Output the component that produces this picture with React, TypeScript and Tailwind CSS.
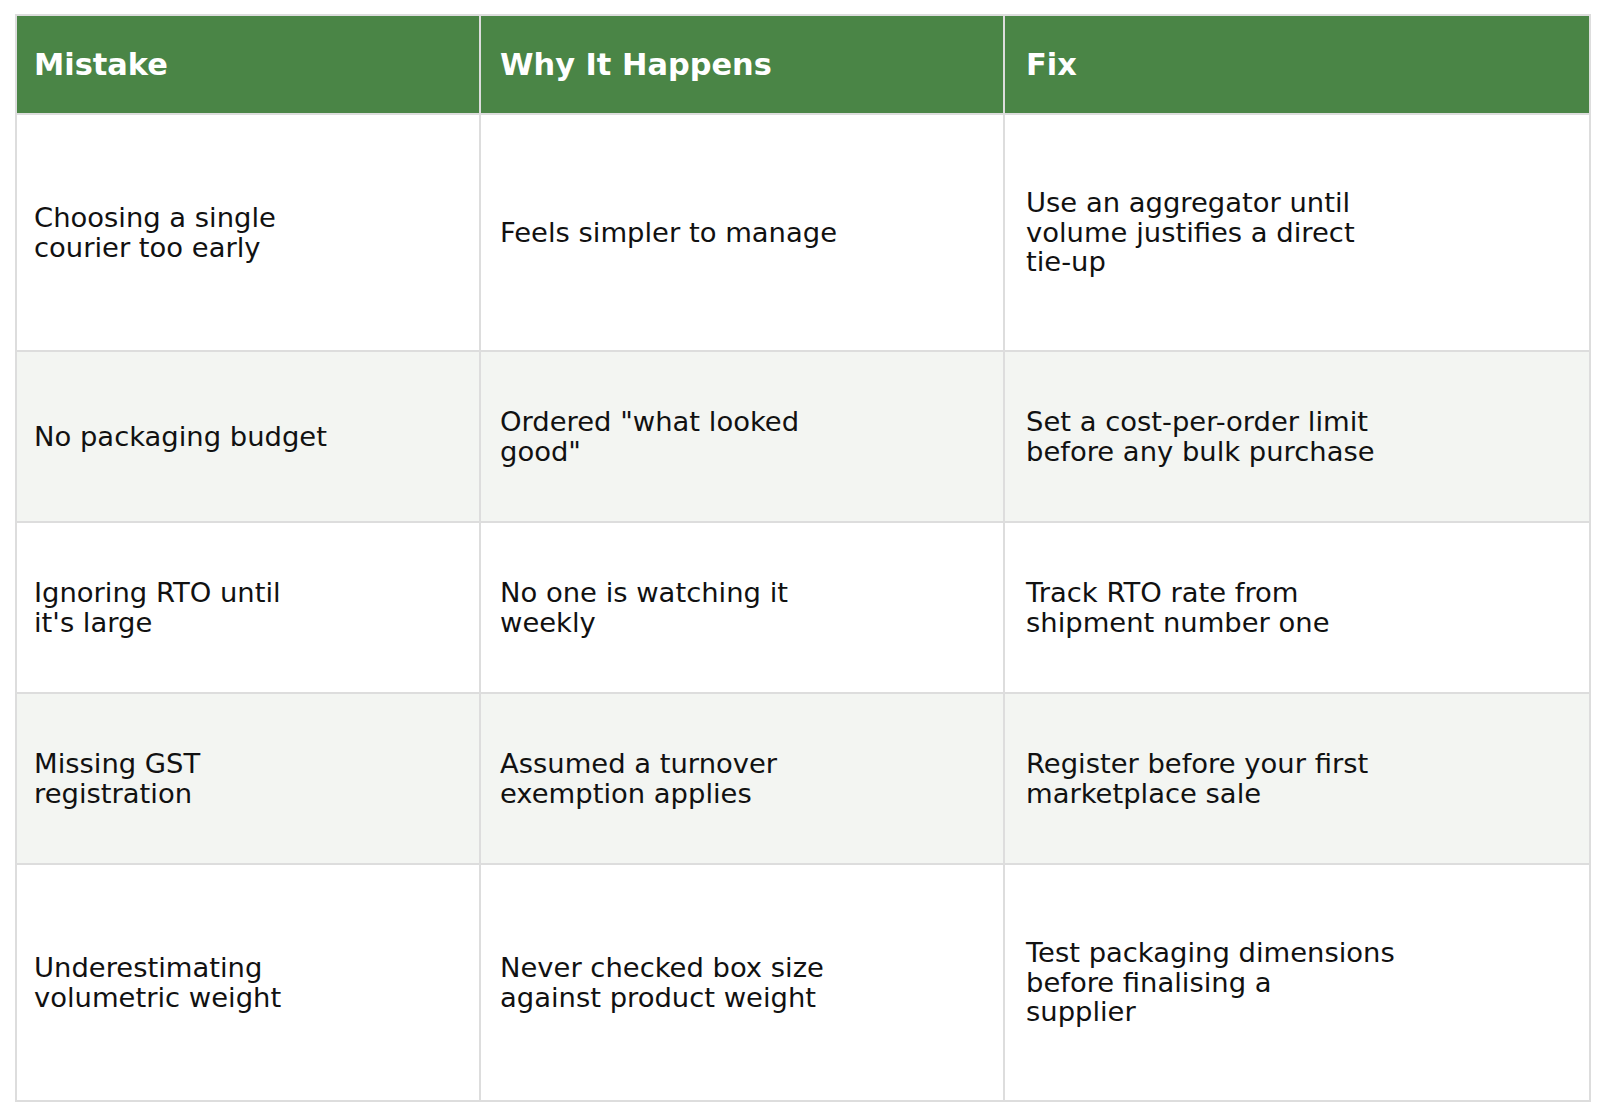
const headers = ["Mistake", "Why It Happens", "Fix"]
const pads = ["pl-[17px] pr-[17px]", "pl-[19px] pr-[17px]", "pl-[21px] pr-[17px]"]

const rows: { h: string; cells: string[][] }[] = [
  {
    h: "h-[237px]",
    cells: [
      ["Choosing a single", "courier too early"],
      ["Feels simpler to manage"],
      ["Use an aggregator until", "volume justifies a direct", "tie-up"],
    ],
  },
  {
    h: "h-[171px]",
    cells: [
      ["No packaging budget"],
      ['Ordered "what looked', 'good"'],
      ["Set a cost-per-order limit", "before any bulk purchase"],
    ],
  },
  {
    h: "h-[171px]",
    cells: [
      ["Ignoring RTO until", "it's large"],
      ["No one is watching it", "weekly"],
      ["Track RTO rate from", "shipment number one"],
    ],
  },
  {
    h: "h-[171px]",
    cells: [
      ["Missing GST", "registration"],
      ["Assumed a turnover", "exemption applies"],
      ["Register before your first", "marketplace sale"],
    ],
  },
  {
    h: "h-[237px]",
    cells: [
      ["Underestimating", "volumetric weight"],
      ["Never checked box size", "against product weight"],
      ["Test packaging dimensions", "before finalising a", "supplier"],
    ],
  },
]

export default function App() {
  return (
    <div className="w-[1604px] h-[1112px] bg-white pt-[14px] pl-[15px] font-['DejaVu_Sans',sans-serif]">
      <table className="table-fixed border-collapse w-[1574px]">
        <colgroup>
          <col className="w-[464px]" />
          <col className="w-[524px]" />
          <col className="w-[586px]" />
        </colgroup>
        <thead>
          <tr className="h-[99px] bg-[#4a8546]">
            {headers.map((h, j) => (
              <th
                key={h}
                className={`border-2 border-[#dddddd] ${pads[j]} text-left align-middle text-[30.4px] font-bold text-white`}
              >
                {h}
              </th>
            ))}
          </tr>
        </thead>
        <tbody>
          {rows.map((row, i) => (
            <tr key={i} className={`${row.h} ${i % 2 === 1 ? "bg-[#f3f5f2]" : "bg-white"}`}>
              {row.cells.map((lines, j) => (
                <td
                  key={j}
                  className={`border-2 border-[#dddddd] ${pads[j]} align-middle text-[27.4px] leading-[29.6px] text-[#111111]`}
                >
                  {lines.map((l, k) => (
                    <div key={k} className="whitespace-nowrap">
                      {l}
                    </div>
                  ))}
                </td>
              ))}
            </tr>
          ))}
        </tbody>
      </table>
    </div>
  )
}
